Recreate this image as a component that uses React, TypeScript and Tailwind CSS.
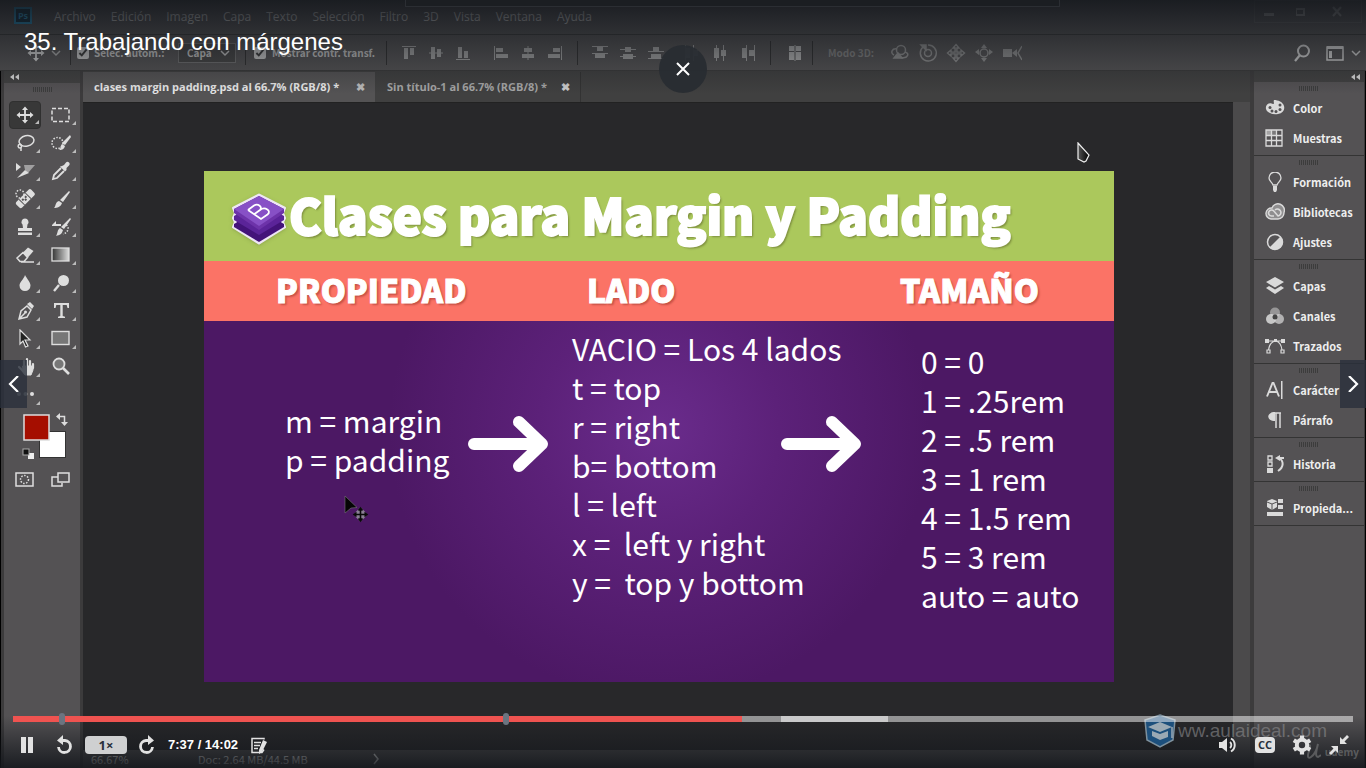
import type { ReactNode } from "react";

type IconProps = { children: ReactNode; size?: "sm" | "md"; className?: string };

function Icon({ children, size = "md", className = "" }: IconProps) {
  const px = size === "sm" ? 16 : 20;
  return (
    <svg width={px} height={px} viewBox={`0 0 ${px} ${px}`} fill="currentColor" aria-hidden="true" className={`shrink-0 ${className}`}>
      {children}
    </svg>
  );
}

const line = { fill: "none", stroke: "currentColor", strokeWidth: 1.5 } as const;

const movePath =
  "M10 1.5 L13 5 H10.9 V9.1 H15 V7 L18.5 10 L15 13 V10.9 H10.9 V15 H13 L10 18.5 L7 15 H9.1 V10.9 H5 V13 L1.5 10 L5 7 V9.1 H9.1 V5 H7 Z";

/* ---------- Menu bar ---------- */

const menus = ["Archivo", "Edición", "Imagen", "Capa", "Texto", "Selección", "Filtro", "3D", "Vista", "Ventana", "Ayuda"];

function MenuBar() {
  return (
    <header className="flex h-[35px] shrink-0 items-start border-b border-[#383838] pl-[14px]">
      <div className="mt-[7px] flex h-[17px] w-[18px] items-center justify-center border-2 border-[#2391c4] bg-[#0d3044] text-[9px] font-bold text-[#2ba3dc]">
        Ps
      </div>
      <nav className="ml-[22px] mt-2 flex gap-[15px] text-[12px] leading-[18px] text-[#c8c8c8]">
        {menus.map((m) => (
          <button key={m} type="button">
            {m}
          </button>
        ))}
      </nav>
      <div className="ml-auto mr-1 flex h-[23px] w-[108px] items-center justify-around border border-[#626262] pr-2 text-[#909090]">
        <button type="button" aria-label="Minimizar">
          <Icon size="sm"><rect x="1" y="9" width="10" height="3" /></Icon>
        </button>
        <button type="button" aria-label="Maximizar">
          <Icon size="sm"><rect x="-1" y="5" width="8" height="6" {...line} strokeWidth="2" transform="translate(1 0)" /></Icon>
        </button>
        <button type="button" aria-label="Cerrar ventana">
          <Icon size="sm"><path d="M4 3 L12 12 M12 3 L4 12" {...line} strokeWidth="2.2" /></Icon>
        </button>
      </div>
    </header>
  );
}

/* ---------- Options bar ---------- */

const alignIcons: { label: string; art: ReactNode }[][] = [
  [
    { label: "Alinear bordes superiores", art: <path d="M1 1h14v1H1z M3 3h4v11H3z M9 3h4v7H9z" /> },
    { label: "Alinear centros verticales", art: <path d="M1 7.5h14v1H1z M3 2h4v12H3z M9 4h4v8H9z" /> },
    { label: "Alinear bordes inferiores", art: <path d="M1 14h14v1H1z M3 2h4v11H3z M9 6h4v7H9z" /> },
  ],
  [
    { label: "Alinear bordes izquierdos", art: <path d="M1 1h1v14H1z M3 3h7v4H3z M3 9h12v4H3z" /> },
    { label: "Alinear centros horizontales", art: <path d="M7.5 1h1v14h-1z M4 3h8v4H4z M2 9h12v4H2z" /> },
    { label: "Alinear bordes derechos", art: <path d="M14 1h1v14h-1z M6 3h7v4H6z M1 9h12v4H1z" /> },
  ],
  [
    { label: "Distribuir bordes superiores", art: <path d="M0 1h16v1H0z M5 2h6v4H5z M0 8h16v1H0z M3 9h10v4H3z" /> },
    { label: "Distribuir centros verticales", art: <path d="M0 4h16v1H0z M5 2h6v5H5z M0 11h16v1H0z M3 9h10v5H3z" /> },
    { label: "Distribuir bordes inferiores", art: <path d="M0 6h16v1H0z M5 2h6v4H5z M0 13h16v1H0z M3 9h10v4H3z" /> },
  ],
  [
    { label: "Distribuir bordes izquierdos", art: <path d="M1 0h1v16H1z M2 3h4v10H2z M9 0h1v16H9z M10 5h4v6h-4z" /> },
    { label: "Distribuir centros horizontales", art: <path d="M4 0h1v16H4z M2 3h5v10H2z M11 0h1v16h-1z M9 5h5v6H9z" /> },
    { label: "Distribuir bordes derechos", art: <path d="M6 0h1v16H6z M2 3h4v10H2z M14 0h1v16h-1z M9 5h5v6H9z" /> },
  ],
];

const modes3d: { label: string; art: ReactNode }[] = [
  {
    label: "Girar objeto 3D",
    art: <g {...line}><circle cx="11" cy="7" r="4.5" /><path d="M7 6 C2 5 0 10 4 12 M15 9 C20 10 18 16 11 14.500" /><path d="M4 15l4-5 4 5z" fill="currentColor" /></g>,
  },
  { label: "Rodar objeto 3D", art: <g {...line}><circle cx="10" cy="10" r="3.5" /><path d="M5 4 a8 8 0 1 0 5 -2" /><path d="M3 2h5v5z" fill="currentColor" /></g> },
  { label: "Arrastrar objeto 3D", art: <path d={movePath} fill="none" stroke="currentColor" strokeWidth="1.4" /> },
  {
    label: "Deslizar objeto 3D",
    art: <g><circle cx="10" cy="10" r="4" {...line} /><path d="M10 1l3 4H7z M10 19l3-4H7z M1 9l4-3v6z M19 9l-4-3v6z" /></g>,
  },
  { label: "Escalar objeto 3D", art: <g><rect x="1" y="6" width="9" height="8" /><path d="M10 10l5-4v8z" /><path d="M20 3l-4 7 4 7" {...line} /></g> },
];

function Divider() {
  return <span className="block h-6 w-px shrink-0 bg-[#303030]" />;
}

function OptionsBar() {
  return (
    <div className="flex h-9 shrink-0 items-center border-b border-[#3a3a3a] pl-[26px] font-['Noto_Sans_CJK_SC',sans-serif] text-[10px] font-bold leading-4 text-[#c0c0c0]">
      <Icon className="text-[#cfcfcf]"><path d={movePath} /></Icon>
      <Icon size="sm" className="ml-[4px] text-[#aaa]"><path d="M2 6l4 4 4-4" {...line} /></Icon>
      <span className="ml-[4px]"><Divider /></span>
      <label className="ml-[6px] flex w-[85px] items-center gap-[5px] whitespace-nowrap">
        <input type="checkbox" defaultChecked className="size-3 accent-[#c4c4c4]" />
        Selec. autom.:
      </label>
      <div className="ml-4 flex h-5 w-[58px] items-center border border-[#6e6e6e] bg-[#454545]">
        <select aria-label="Selección automática" className="w-full appearance-none bg-transparent pl-2 text-[10px] font-bold leading-4 outline-none">
          <option>Capa</option>
        </select>
        <Icon size="sm"><path d="M2 6l4 4 4-4" {...line} /></Icon>
      </div>
      <span className="ml-[9px]"><Divider /></span>
      <label className="ml-2 flex w-[120px] items-center gap-[6px] whitespace-nowrap">
        <input type="checkbox" defaultChecked className="size-3 accent-[#c4c4c4]" />
        Mostrar contr. transf.
      </label>
      <span className="ml-3"><Divider /></span>
      <div className="ml-[14px] flex items-center gap-[22px] text-[#a0a0a0]">
        {alignIcons.slice(0, 2).map((g, i) => (
          <div key={i} className="flex gap-[11px]">
            {g.map((a) => (
              <button key={a.label} type="button" aria-label={a.label}><Icon size="sm">{a.art}</Icon></button>
            ))}
          </div>
        ))}
      </div>
      <span className="ml-[14px]"><Divider /></span>
      <div className="ml-[14px] flex items-center gap-[20px] text-[#a0a0a0]">
        {alignIcons.slice(2).map((g, i) => (
          <div key={i} className="flex gap-3">
            {g.map((a) => (
              <button key={a.label} type="button" aria-label={a.label}><Icon size="sm">{a.art}</Icon></button>
            ))}
          </div>
        ))}
      </div>
      <span className="ml-[14px]"><Divider /></span>
      <button type="button" aria-label="Alinear capas automáticamente" className="ml-4 text-[#b0b0b0]">
        <Icon size="sm"><path d="M2 1h5v5H2z M9 1h5v5H9z M2 7h5v8H2z M9 7h5v8H9z M7.500 0h1v16h-1z" /></Icon>
      </button>
      <span className="ml-[9px]"><Divider /></span>
      <span className="ml-[15px] w-[46px] whitespace-nowrap text-[#808080]">Modo 3D:</span>
      <div className="ml-4 flex gap-2 text-[#909090]">
        {modes3d.map((m) => (
          <button key={m.label} type="button" aria-label={m.label}><Icon>{m.art}</Icon></button>
        ))}
      </div>
      <div className="ml-auto flex items-center gap-3 text-[#cfcfcf]">
        <button type="button" aria-label="Buscar"><Icon><circle cx="9.500" cy="8" r="5.500" {...line} strokeWidth="2" /><path d="M6 12l-5 6" {...line} strokeWidth="2.200" /></Icon></button>
        <button type="button" aria-label="Espacio de trabajo" className="flex items-center gap-[4px]">
          <Icon><rect x="1" y="4" width="16" height="13" {...line} /><path d="M1 3h16v3H1z M3 8h3v7H3z" /></Icon>
          <Icon size="sm"><path d="M2 6l4 4 4-4" {...line} /></Icon>
        </button>
      </div>
    </div>
  );
}

/* ---------- Tools ---------- */

const tools: { label: string; art: ReactNode }[] = [
  { label: "Mover", art: <path d={movePath} /> },
  { label: "Marco rectangular", art: <rect x="1" y="3.500" width="17" height="13" {...line} strokeDasharray="4 2" /> },
  { label: "Lazo", art: <g {...line}><ellipse cx="11.500" cy="8" rx="7.500" ry="5.200" transform="rotate(-12 11 8)" /><path d="M5 11c-3 1-2 4 0 4s2-3 0-4M6 14v4" /></g> },
  {
    label: "Selección rápida",
    art: <g><circle cx="6.500" cy="10" r="5.500" {...line} strokeDasharray="1.500 1.500" /><path d="M19 2l1 2-6 8-3-2z M11 11l3 2c-1 4-4 4-6 4 2-1 1-4 3-6z" /></g>,
  },
  { label: "Sector", art: <g><path d="M1 2l5 4-5 4z M2 17l8-8 4 3z" /><path d="M9 4h11l-7 8-3-3z" opacity=".55" /></g> },
  {
    label: "Cuentagotas",
    art: <g><path d="M11 5l2-1 2-2.500 c2-2 5 1 3 3l-2.500 2.500 v2 l-1.500 1.500-5-5z" /><path d="M10 7l-7 7-1 4 4-1 7-7" {...line} strokeWidth="1.800" /></g>,
  },
  {
    label: "Pincel corrector",
    art: <g><circle cx="5" cy="5" r="4" {...line} strokeDasharray="1.500 1.500" /><g transform="rotate(-45 10 10)"><rect x="0" y="6" width="21" height="8" rx="2" /><path d="M5.500 6v8M14.500 6v8" stroke="#535153" /><path d="M7 8h2v2H7z M11 8h2v2h-2z M9 10h2v2H9z" fill="#535153" /></g></g>,
  },
  { label: "Pincel", art: <path d="M18 2l1 1-7 10-3-2z M8 12l3 2c-1 4-5 5-8 5 2-2 1-6 5-7z" /> },
  { label: "Tampón de clonar", art: <path d="M10 1.500a3.500 3.500 0 0 1 2.500 6L12 11h5v3H3v-3h5L7.500 7.500A3.500 3.500 0 0 1 10 1.500z M3 15.500h14V18H3z" /> },
  {
    label: "Pincel de historia",
    art: <g><path d="M19 1l1 1-7 10-3-2z M9 11l3 2c-1 4-3 5-7 6 2-3 1-6 4-8z M1 8l4-4v3h5v2H1z" /><path d="M15 8c4 2 2 8-3 9" {...line} strokeDasharray="1.500 1.500" /></g>,
  },
  { label: "Borrador", art: <g><path d="M8 7.500l5-5 5.500 3.500-6 7z" /><path d="M8 7.500l4.500 5-3.500 4H5l-3-3.500z M6 17h13" {...line} /></g> },
  {
    label: "Degradado",
    art: <g><defs><linearGradient id="tool-grad"><stop offset="0" stopColor="#333" /><stop offset="1" stopColor="#ddd" /></linearGradient></defs><rect x="1" y="3" width="17" height="13" fill="url(#tool-grad)" stroke="currentColor" strokeWidth="1.300" /></g>,
  },
  { label: "Desenfocar", art: <path d="M10 2c2 4 5.500 7 5.500 10.500a5.500 5.500 0 0 1-11 0C4.500 9 9 6 10 2z" /> },
  { label: "Sobreexponer", art: <g><circle cx="12.500" cy="7.500" r="5.500" /><path d="M8 12l-5 6" {...line} strokeWidth="2.400" /></g> },
  { label: "Pluma", art: <g><path d="M12 5l4 4-4 7-8 2 2-8z M4 18l6-6" {...line} /><circle cx="10.500" cy="11" r="1.500" /><path d="M12 3l3-2 4 4-2 3z" /></g> },
  { label: "Texto", art: <path d="M3 2h15v5h-1.500l-.8-3h-4v11l2.300.8V17H7v-1.200l2.300-.8V4h-4l-.8 3H3z" /> },
  { label: "Selección de trazado", art: <path d="M5 1l10 10h-5l3 6-2.500 1L8 12l-3 3z" fill="#222" stroke="currentColor" strokeWidth="1.200" /> },
  { label: "Rectángulo", art: <rect x="1" y="2.500" width="17" height="13" fill="#777" stroke="currentColor" strokeWidth="1.400" /> },
  {
    label: "Mano",
    art: <g stroke="currentColor" strokeWidth="2.200" strokeLinecap="round"><path d="M9 10V4M12 10V2M15 10V4M18 11V7M8 14L4 10" /><path d="M8 9h10v4l-2 5h-6l-3-4z" strokeWidth="1" /></g>,
  },
  { label: "Zoom", art: <g {...line}><circle cx="8" cy="7" r="5.500" strokeWidth="1.800" fill="#777" /><path d="M12 11l6 6" strokeWidth="2.600" /></g> },
  { label: "Editar barra de herramientas", art: <g><circle cx="4" cy="9" r="2" opacity=".6" /><circle cx="10.500" cy="9" r="2" opacity=".6" /><circle cx="17" cy="9" r="2" /></g> },
];

function Grip() {
  return (
    <span className="flex justify-center gap-px">
      {Array.from({ length: 10 }, (_, i) => (
        <span key={i} className="h-[5px] w-px bg-[#3c3c3c]" />
      ))}
    </span>
  );
}

function Collapse() {
  return (
    <svg width="9" height="6" viewBox="0 0 9 6" fill="#d8d8d8" aria-hidden="true">
      <path d="M0 3l4-3v6z M5 3l4-3v6z" />
    </svg>
  );
}

function ToolStrip() {
  return (
    <aside className="flex w-[76px] shrink-0 flex-col bg-[#545254] text-[#dedede]">
      <div className="flex h-3 items-center bg-[#414141] pl-[6px]">
        <Collapse />
      </div>
      <div className="h-[18px] pt-1"><Grip /></div>
      <div className="grid grid-cols-[32px_32px] gap-x-1 pl-[5px]">
        {tools.map((t, i) => (
          <button
            key={t.label}
            type="button"
            aria-label={t.label}
            className={i === 0 ? "relative flex h-7 items-center justify-center rounded-sm border border-[#303030] bg-[#383838]" : "relative flex h-7 items-center justify-center"}
          >
            <Icon>{t.art}</Icon>
            {t.label !== "Zoom" && (
              <svg width="4" height="4" className="absolute bottom-1 right-px" aria-hidden="true"><path d="M4 0v4H0z" fill="#bbb" /></svg>
            )}
          </button>
        ))}
      </div>
      <button type="button" aria-label="Color frontal y de fondo" className="ml-[17px] mt-[3px] w-12">
        <svg width="48" height="48" viewBox="0 0 48 48" aria-hidden="true">
          <rect x="18.500" y="19.500" width="26" height="26" fill="#fff" stroke="#333" />
          <rect x="3" y="3" width="25" height="25" fill="#a50e00" stroke="#ddd" strokeWidth="1.500" />
          <path d="M39 1v7l-4-3.500z M40 10h7l-3.500 4z" fill="#ddd" />
          <path d="M38 4.500h5.500v6" fill="none" stroke="#ddd" strokeWidth="1.500" />
          <rect x="7" y="41" width="6" height="6" fill="#eee" />
          <rect x="2" y="37" width="6" height="6" fill="#111" stroke="#aaa" />
        </svg>
      </button>
      <div className="mt-[10px] grid grid-cols-[32px_32px] gap-x-1 pl-[5px]">
        <button type="button" aria-label="Máscara rápida" className="flex justify-center">
          <Icon><rect x="1" y="3" width="17" height="13" {...line} /><circle cx="9.500" cy="9.500" r="4" {...line} strokeDasharray="1.500 1.500" /></Icon>
        </button>
        <button type="button" aria-label="Modo de pantalla" className="flex justify-center">
          <Icon><path d="M7 7H1v9h10v-3M7 3h11v9H7z" {...line} /></Icon>
        </button>
      </div>
    </aside>
  );
}

/* ---------- Slide ---------- */

function BootstrapLogo() {
  return (
    <svg width="56" height="52" viewBox="0 0 56 52" aria-hidden="true" className="mt-1 shrink-0 drop-shadow">
      <path
        d="M2.500 15 L28 2 L53.500 15 L51.500 20 L53.500 25 L51.500 29 L53.500 34 L28 50 L2.500 34 L4.500 29 L2.500 25 L4.500 20 Z"
        fill="#4b1c84"
        stroke="#eee6f5"
        strokeWidth="3"
        strokeLinejoin="round"
      />
      <path d="M3 31 L28 17 L53 31 V34 L28 49 L3 34Z" fill="#431379" />
      <path d="M3 23 L28 9 L53 23 V27 L28 42 L3 27Z" fill="#5b2499" />
      <path d="M3 16 L28 3 L53 16 V20 L28 37 L3 20Z" fill="#6d33a9" />
      <path d="M3 16 L28 3 L53 16 L28 33Z" fill="#8750c6" />
      <path d="M17 17 L23 12.500 C27 10 32 14 29 17 L23.500 21 M29 17 C34 13 41 18 36.500 21.500 L30 26 L17 17" fill="none" stroke="#fff" strokeWidth="1.800" />
    </svg>
  );
}

function SlideArrow() {
  return (
    <svg width="80" height="60" viewBox="0 0 80 60" fill="none" stroke="#fff" strokeWidth="12" strokeLinecap="round" strokeLinejoin="round" aria-hidden="true">
      <path d="M6 30H73 M51 8L74 30L51 52" />
    </svg>
  );
}

const sides = ["VACIO = Los 4 lados", "t = top", "r = right", "b= bottom", "l = left", "x =  left y right", "y =  top y bottom"];
const sizes = ["0 = 0", "1 = .25rem", "2 = .5 rem", "3 = 1 rem", "4 = 1.5 rem", "5 = 3 rem", "auto = auto"];

function Lines({ items }: { items: string[] }) {
  return (
    <ul className="whitespace-pre">
      {items.map((s) => (
        <li key={s}>{s}</li>
      ))}
    </ul>
  );
}

function Slide() {
  return (
    <article className="flex flex-1 flex-col bg-[#4c1864] text-white">
      <div className="flex h-[90px] shrink-0 items-start bg-[#abc85c] pl-[27px] pt-[18px]">
        <BootstrapLogo />
        <h1 className="whitespace-nowrap pl-[2px] font-['Noto_Sans_CJK_SC',sans-serif] text-[49px] font-black leading-[50px] [-webkit-text-stroke:2px_white] [text-shadow:2px_2px_2px_rgba(60,60,20,0.4)]">
          Clases para Margin y Padding
        </h1>
      </div>
      <div className="grid h-[60px] shrink-0 grid-cols-[383fr_313fr_214fr] items-start bg-[#fb7366] font-['Noto_Sans_CJK_SC',sans-serif] text-[32px] font-black leading-[56px] [-webkit-text-stroke:1px_white] [text-shadow:2px_2px_2px_rgba(120,30,20,0.4)]">
        <h2 className="pl-[72px]">PROPIEDAD</h2>
        <h2>LADO</h2>
        <h2>TAMAÑO</h2>
      </div>
      <div className="grid flex-1 grid-cols-[minmax(0,264fr)_minmax(0,104fr)_minmax(0,209fr)_minmax(0,140fr)_minmax(0,193fr)] bg-[radial-gradient(circle_at_50%_30%,#6a2c8c_0,#5c2179_120px,#4c1864_270px)] font-['Noto_Sans_CJK_SC',sans-serif] text-[30px] leading-[39px]">
        <div className="pl-[81px] pt-[80px]"><Lines items={["m = margin", "p = padding"]} /></div>
        <div className="pt-[93px]"><SlideArrow /></div>
        <div className="pt-[8px]"><Lines items={sides} /></div>
        <div className="pt-[93px]"><SlideArrow /></div>
        <div className="pt-[21px]"><Lines items={sizes} /></div>
      </div>
    </article>
  );
}

/* ---------- Document area ---------- */

function DocumentArea() {
  return (
    <main className="ml-[3px] flex min-w-0 flex-1 flex-col bg-[#404040]">
      <div className="flex h-[31px] shrink-0 pt-px text-[11px] font-bold">
        <button type="button" className="flex w-[292px] items-center justify-between whitespace-nowrap bg-[#545354] pl-[11px] pr-[10px] text-[#e8e8e8]">
          clases margin padding.psd al 66.7% (RGB/8) *
          <span className="w-[9px] text-[11px] text-[#bbb]">✖</span>
        </button>
        <button type="button" className="flex w-[206px] items-center justify-between whitespace-nowrap border-r border-[#333] pl-3 pr-[10px] text-[#a6a6a6]">
          Sin título-1 al 66.7% (RGB/8) *
          <span className="w-[9px] text-[11px] text-[#ccc]">✖</span>
        </button>
      </div>
      <div className="flex flex-1">
        <div className="flex min-w-0 flex-1 flex-col border-t border-[#222] bg-[#28282a] pb-[68px] pl-[121px] pr-[119px] pt-[68px]">
          <Slide />
        </div>
        <div className="w-[17px] shrink-0 bg-[#4b4a4b]" />
      </div>
      <div className="flex h-[18px] shrink-0 items-center bg-[#4b4a4b] pl-2 font-['Noto_Sans_CJK_SC',sans-serif] text-[11px] leading-[18px] text-[#e6e6e6]">
        <span className="w-[107px]">66.67%</span>
        <span className="w-[108px] whitespace-nowrap">Doc: 2.64 MB/44.5 MB</span>
        <Icon size="sm" className="ml-[62px]"><path d="M6 3l4 5-4 5" {...line} /></Icon>
      </div>
    </main>
  );
}

/* ---------- Right panels ---------- */

const panels: { label: string; art: ReactNode }[][] = [
  [
    {
      label: "Color",
      art: <g><path d="M9 2c-1 2 1 4-1 4C4 4 0 7 1 11c1 4 7 6 12 5 5-1 7-4 6-8-1-4-6-6-10-6z" /><g fill="#545254"><circle cx="5" cy="9.500" r="1.500" /><circle cx="7" cy="13" r="1.500" /><circle cx="11" cy="13.500" r="1.500" /><circle cx="15" cy="11.500" r="1.500" /><circle cx="15" cy="7" r="1.500" /></g></g>,
    },
    {
      label: "Muestras",
      art: <g><rect x="1" y="2" width="16" height="16" fill="#545254" /><path d="M1 2h5v5H1z" opacity=".6" /><path d="M6 2h6v5H6z" opacity=".3" /><path d="M1 2h16v16H1z M6.500 2v16M11.500 2v16M1 7.500h16M1 12.500h16" {...line} strokeWidth="1.300" /></g>,
    },
  ],
  [
    { label: "Formación", art: <g><path d="M8 13C7 10 4 9 4 6a6 6 0 0 1 12 0c0 3-3 4-4 7z" {...line} strokeWidth="1.300" /><path d="M8 14h4v4l-1 2H9l-1-2z" /></g> },
    {
      label: "Bibliotecas",
      art: <g><path d="M6 17a5.500 5.500 0 1 1 1-11A6.300 6.300 0 0 1 19 10.500 6.300 6.300 0 0 1 13 17z" fill="#8f8e8f" stroke="currentColor" strokeWidth="1.400" /><path d="M9 14H6.500a3 3 0 1 1 2.300-5L13 14a3.500 3.500 0 1 0-3-6" {...line} strokeWidth="1.600" /></g>,
    },
    { label: "Ajustes", art: <g><circle cx="10" cy="10" r="7.500" {...line} /><path d="M15.500 4.500A7.700 7.700 0 0 1 4.500 15.500z" /></g> },
  ],
  [
    { label: "Capas", art: <path d="M10 1l9 5-9 5.500L1 6z M1 12l3-2 6 3.500 6-3.500 3 2-9 6z" /> },
    { label: "Canales", art: <g><circle cx="10" cy="6.500" r="5" opacity=".5" /><circle cx="6" cy="13" r="5" opacity=".85" /><circle cx="14" cy="13" r="5" opacity=".7" /><circle cx="10" cy="11" r="2.500" fill="#444" /></g> },
    { label: "Trazados", art: <g><path d="M0 3h4v4H0z M9 3h3v3H9z M16 3h4v4h-4z" /><path d="M3 5h14M10 5C6 6 4 10 3.500 14M11 5c4 1 5.500 5 6 9M2 14h3v3H2z M16 14h3v3h-3z" {...line} strokeWidth="1.200" /></g> },
  ],
  [
    { label: "Carácter", art: <g><path d="M2 16.500L7.500 3h1L14 16.500M4 12h8" {...line} strokeWidth="1.900" /><path d="M16 1h1.500v18H16z" /></g> },
    { label: "Párrafo", art: <g><path d="M10 2v9C1 11 1 2 10 2z" /><path d="M9 3h7M11 3v15M15 3v15" {...line} /></g> },
  ],
  [
    { label: "Historia", art: <g><path d="M3 2h4v4H3z M3 8h4v4H3z" {...line} strokeWidth="1.300" /><path d="M2 14h6v5H2z M10 4l5-3v2h4v2h-4v2z" /><path d="M14 4c5 3 5 9-1 13" {...line} strokeWidth="2" /></g> },
  ],
  [
    { label: "Propieda...", art: <g><path d="M7 1l5 2v6l-5 3-5-3V3z M13 1h5v4h-5z M13 7h5v4h-5z M2 14h16v4H2z" /><path d="M2 4l5 2 5-2M7 6v6" stroke="#545254" fill="none" /></g> },
  ],
];

function PanelDock() {
  return (
    <aside className="ml-1 mr-px w-[110px] shrink-0 bg-[#545254]">
      <div className="flex h-[11px] items-center justify-end bg-[#414141] pr-1"><Collapse /></div>
      {panels.map((group, i) => (
        <section key={i} className="border-b border-[#343434] pb-[2px]">
          <div className="h-[11px] pr-[2px] pt-1"><Grip /></div>
          {group.map((p) => (
            <button key={p.label} type="button" className="flex h-[30px] w-full items-center gap-2 pl-[11px] font-['Noto_Sans_CJK_SC',sans-serif] text-[11px] font-bold leading-4 text-[#eee]">
              <Icon className="text-[#dadada]">{p.art}</Icon>
              {p.label}
            </button>
          ))}
        </section>
      ))}
    </aside>
  );
}

/* ---------- Video player overlay ---------- */

const bookmarks = [62, 506];

function ControlButton({ label, children }: { label: string; children: ReactNode }) {
  return (
    <button type="button" aria-label={label} className="flex size-5 items-center justify-center text-[#e2e2e2]">
      {children}
    </button>
  );
}

function PlayerControls() {
  return (
    <div className="absolute inset-x-0 bottom-0 h-[52px] font-['Liberation_Sans',sans-serif]">
      <div className="relative mx-[13px] flex h-[6px] bg-white/50">
        <div className="w-[54.400%] bg-[#ef5350]" />
        <div className="w-[2.900%]" />
        <div className="w-[8%] bg-white/50" />
        {bookmarks.map((b) => (
          <span key={b} className="absolute -top-[3px] h-3 w-[6px] rounded-sm bg-[#6b7480]" style={{ left: `${((b - 16) / 1340) * 100}%` }} />
        ))}
      </div>
      <div className="flex h-[46px] items-center px-[17px]">
        <ControlButton label="Pausa"><Icon><path d="M4 2h5v16H4z M11 2h5v16h-5z" /></Icon></ControlButton>
        <span className="ml-[17px] flex">
          <ControlButton label="Retroceder">
            <Icon><path d="M6 5.500h5a6 6 0 1 1-6.500 6.500" {...line} strokeWidth="2.800" /><path d="M9 0v10L3 5.500z" /></Icon>
          </ControlButton>
        </span>
        <button type="button" className="ml-[11px] h-[18px] w-[42px] rounded-sm bg-[#cfd0d1] font-['Open_Sans',sans-serif] text-[13px] font-bold leading-[18px] text-[#29303b]">1×</button>
        <span className="ml-[10px] flex">
          <ControlButton label="Avanzar">
            <Icon><path d="M14 5.500H9a6 6 0 1 0 6.500 6.500" {...line} strokeWidth="2.800" /><path d="M11 0v10l6-4.500z" /></Icon>
          </ControlButton>
        </span>
        <time className="ml-[11px] text-[13px] font-bold text-white">7:37 / 14:02</time>
        <span className="ml-[11px] flex">
          <ControlButton label="Añadir nota">
            <Icon><path d="M15 4.500V3.500H3v14h10l2-3M5 7.500h7M5 10.500h6M5 13.500h4" {...line} /><path d="M14 5l4 2-5 10-3 2v-4z" /></Icon>
          </ControlButton>
        </span>
        <div className="ml-auto flex items-center gap-[17px]">
          <ControlButton label="Volumen">
            <Icon><path d="M1 7h3l5-4v14l-5-4H1z" /><path d="M12 7a4 4 0 0 1 0 6M13 3.500a7.500 7.500 0 0 1 0 13" {...line} strokeWidth="1.900" /></Icon>
          </ControlButton>
          <button type="button" aria-label="Subtítulos" className="flex h-4 w-5 items-center justify-center rounded-sm bg-[#e2e2e2] font-['Open_Sans',sans-serif] text-[11px] font-bold leading-4 text-[#29303b]">CC</button>
          <ControlButton label="Ajustes del vídeo">
            <Icon>
              <circle cx="10" cy="10" r="5.200" fill="none" stroke="currentColor" strokeWidth="4" />
              <path d="M10 .5v4M10 15.500v4M1.800 5.200l3.400 2M14.800 12.800l3.400 2M18.200 5.200l-3.400 2M5.200 12.800l-3.400 2" stroke="currentColor" strokeWidth="4.200" />
            </Icon>
          </ControlButton>
          <ControlButton label="Salir de pantalla completa">
            <Icon><path d="M11 9V2l2.500 2.500L18 0l2 2-4.500 4.500L18 9z M9 11v7l-2.500-2.500L2 20l-2-2 4.500-4.500L2 11z" /></Icon>
          </ControlButton>
        </div>
      </div>
    </div>
  );
}

function Watermark() {
  return (
    <div className="absolute bottom-5 right-[39px] flex items-center gap-[2px] font-['Liberation_Sans',sans-serif] text-[19px] text-[#8c8c8e]/60">
      <svg width="32" height="34" viewBox="0 0 32 34" aria-hidden="true">
        <path d="M16 1L31 6L29 26L16 33L3 26L1 6Z" fill="#1c4f7c" stroke="#7d909d" strokeWidth="1.500" />
        <path d="M16 8L28 13L16 18L4 13Z M8 17L16 20L24 17V23L16 26L8 22Z" fill="#9aa9b4" />
        <path d="M28 13v11" stroke="#9aa9b4" strokeWidth="1.500" />
      </svg>
      <span>ww.aulaideal.com</span>
    </div>
  );
}

function Udemy() {
  return (
    <div className="absolute bottom-[7px] right-[7px] flex items-center gap-1 text-[10px] font-bold text-[#8a8a8a]/50">
      <svg width="16" height="18" viewBox="0 0 16 18" aria-hidden="true">
        <path d="M2 6C5 0 6 2 4 8s-1 8 2 6 6-8 7-13c-2 7-3 13 0 13l3-2" fill="none" stroke="currentColor" strokeWidth="2" />
      </svg>
      <span>udemy</span>
    </div>
  );
}

function Cursors() {
  return (
    <>
      <svg width="16" height="22" viewBox="0 0 16 22" className="absolute left-[1076px] top-[142px]" aria-hidden="true">
        <defs><linearGradient id="cursor-fill"><stop offset="0" stopColor="#555" /><stop offset="1" stopColor="#000" /></linearGradient></defs>
        <path d="M2 1L13 13L10 19L8 20L2 17Z" fill="url(#cursor-fill)" stroke="#eee" strokeWidth="1.200" />
      </svg>
      <svg width="26" height="28" viewBox="0 0 26 28" className="absolute left-[343px] top-[495px]" aria-hidden="true">
        <path d="M2 1L14 12.500L8 13L2 18Z" fill="#050505" stroke="#777" strokeWidth=".6" />
        <path d="M17.500 12l7 7.500-7 7.500-7-7.500z" fill="#8a7f95" />
        <path d="M17.500 14v11M12 19.500h11M15.500 15.500l2-2.500 2 2.500M15.500 23.500l2 2.500 2-2.500M13.500 17.500l-2.500 2 2.500 2M21.500 17.500l2.500 2-2.500 2" fill="none" stroke="#0a0a0a" strokeWidth="1.600" />
      </svg>
    </>
  );
}

export default function App() {
  return (
    <div className="relative flex h-screen flex-col overflow-hidden bg-[#535253] font-['Open_Sans','Noto_Sans',sans-serif]">
      <MenuBar />
      <OptionsBar />
      <div className="flex min-h-0 flex-1 border-l border-r border-black bg-[#3c3b3c] pl-[3px]">
        <ToolStrip />
        <DocumentArea />
        <PanelDock />
      </div>

      <div className="pointer-events-none absolute inset-x-0 top-0 h-[94px] bg-linear-to-b from-[#14171c]/90 to-[#14171c]/0" />
      <div className="pointer-events-none absolute left-[405px] right-[306px] top-0 h-[7px] border border-t-0 border-[#2b2e33] bg-[#1b1e22]" />
      <div className="pointer-events-none absolute inset-x-0 bottom-0 h-[52px] bg-linear-to-t from-[#14171c]/90 to-[#14171c]/0" />
      <Udemy />
      <Watermark />
      <Cursors />

      <h1 className="absolute left-6 top-[26px] font-['Liberation_Sans',sans-serif] text-[24px] leading-8 text-white">35. Trabajando con márgenes</h1>
      <button type="button" aria-label="Cerrar" className="absolute left-1/2 top-[45px] flex size-12 -translate-x-1/2 items-center justify-center rounded-full bg-[#282c32]/95 text-white">
        <Icon size="sm"><path d="M2 2l12 12M14 2L2 14" {...line} strokeWidth="2" /></Icon>
      </button>
      <button type="button" aria-label="Lección anterior" className="absolute left-0 top-[360px] flex h-12 w-[27px] items-center justify-center bg-[#29303b]/80 text-white">
        <Icon size="sm"><path d="M12 0L4 8l8 8" {...line} strokeWidth="2.200" /></Icon>
      </button>
      <button type="button" aria-label="Lección siguiente" className="absolute right-0 top-[360px] flex h-12 w-[26px] items-center justify-center bg-[#29303b]/80 text-white">
        <Icon size="sm"><path d="M4 0l8 8-8 8" {...line} strokeWidth="2.200" /></Icon>
      </button>
      <PlayerControls />
    </div>
  );
}
